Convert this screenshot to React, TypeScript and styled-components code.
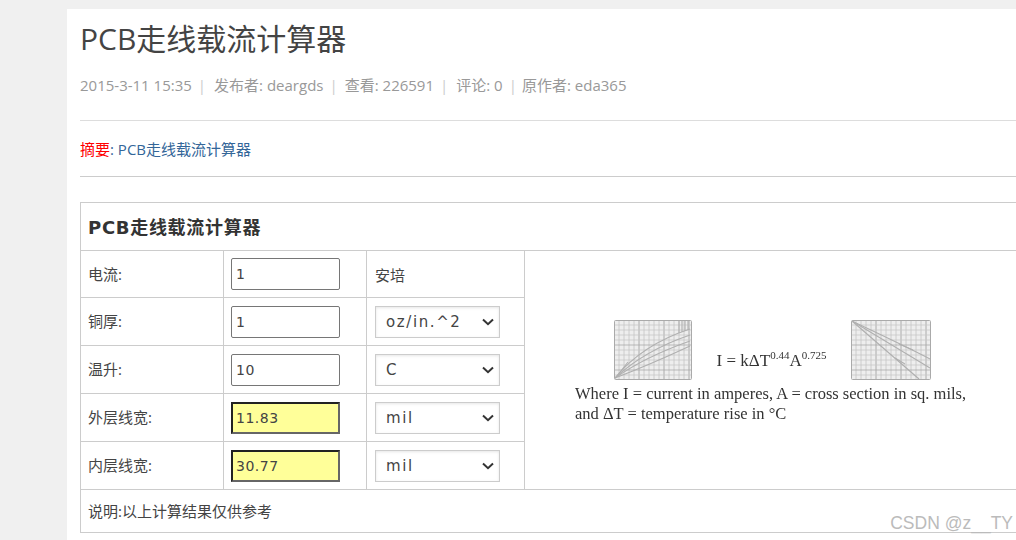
import React, { FC } from "react";
import styled, { createGlobalStyle } from "styled-components";

const latinCjk = `"Open Sans", "Noto Sans CJK SC", sans-serif`;
const inputFont = `"DejaVu Sans", "Noto Sans CJK SC", sans-serif`;

const GlobalStyle = createGlobalStyle`
  html, body {
    margin: 0;
    padding: 0;
    width: 1016px;
    height: 540px;
    overflow: hidden;
    background: #f0f0f0;
  }
`;

const Page = styled.div`
  margin: 9px 0 0 67px;
  width: 949px;
  height: 531px;
  padding: 0 0 0 13px;
  box-sizing: border-box;
  background: #fff;
  overflow: hidden;
  font-family: ${latinCjk};
`;

const Title = styled.h1`
  margin: 0;
  padding-top: 9px;
  height: 48px;
  font-size: 30px;
  line-height: 41px;
  font-weight: 400;
  color: #444;
  white-space: nowrap;
`;

const Meta = styled.div`
  margin-top: 9px;
  height: 45px;
  font-size: 15px;
  line-height: 20px;
  color: #999;
  white-space: nowrap;
  border-bottom: 1px solid #ddd;
  width: 1000px;
`;

const Sep = styled.span<{ $gap: number }>`
  color: #ccc;
  margin: 0 ${(p) => p.$gap}px 0 6px;
`;

const Summary = styled.div`
  width: 1000px;
  height: 56px;
  box-sizing: border-box;
  border-bottom: 1px solid #ccc;
  padding-top: 18px;
  font-size: 15px;
  line-height: 20px;
  color: #369;
`;

const SummaryLabel = styled.span`
  color: #f00;
`;

const CalcTable = styled.table`
  margin-top: 25px;
  width: 1000px;
  border-collapse: collapse;
  table-layout: fixed;
  color: #444;
  font-size: 15px;
`;

const HeadCell = styled.th`
  height: 48px;
  box-sizing: border-box;
  padding: 0 7px 2px;
  border: 1px solid #ccc;
  text-align: left;
  font-family: ${inputFont};
  font-size: 18px;
  font-weight: 700;
  letter-spacing: 0.7px;
  color: #333;
`;

const Cell = styled.td<{ $first?: boolean }>`
  height: ${(p) => (p.$first ? "47px" : "48px")};
  padding: 0 7px;
  border: 1px solid #ccc;
  box-sizing: border-box;
  white-space: nowrap;
`;

const LabelCell = styled(Cell)`
  padding-bottom: 2px;
`;

const FieldCell = styled(Cell)`
  padding: 0 0 0 7px;
`;

const UnitCell = styled(Cell)`
  padding: 0 8px;
`;

const FormulaCell = styled.td`
  border: 1px solid #ccc;
  padding: 0;
  vertical-align: middle;
`;

const NoteCell = styled.td`
  height: 43px;
  box-sizing: border-box;
  padding: 0 7px 1px;
  border: 1px solid #ccc;
`;

const Field = styled.div<{ $result?: boolean }>`
  width: 109px;
  height: 32px;
  box-sizing: border-box;
  padding-left: ${(p) => (p.$result ? "3px" : "4px")};
  border-radius: ${(p) => (p.$result ? "0" : "2px")};
  border-style: solid;
  border-width: ${(p) => (p.$result ? "2px" : "1px")};
  border-color: ${(p) => (p.$result ? "#222 #666 #666 #222" : "#767676")};
  background: ${(p) => (p.$result ? "#ffff99" : "#fff")};
  font-family: ${inputFont};
  font-size: 14px;
  line-height: ${(p) => (p.$result ? "28px" : "30px")};
  letter-spacing: 0.5px;
  color: #444;
`;

const Picker = styled.div`
  width: 125px;
  height: 32px;
  box-sizing: border-box;
  display: flex;
  align-items: center;
  justify-content: space-between;
  padding: 0 5px 0 10px;
  border: 1px solid #ccc;
  box-shadow: inset 0 1px 3px rgba(0, 0, 0, 0.1);
  font-family: ${inputFont};
  font-size: 15px;
  letter-spacing: 1.6px;
  color: #444;
`;

const Formula = styled.div`
  width: 391px;
  margin: 3px 0 0 50px;
  font-family: "Liberation Serif", serif;
  color: #333;
  filter: blur(0.4px);
`;

const Charts = styled.div`
  display: flex;
  align-items: flex-end;
  justify-content: space-between;
  padding: 0 35px 0 39px;
`;

const Equation = styled.div`
  font-size: 17px;
  line-height: 19px;
  padding-bottom: 10px;
  white-space: nowrap;
  sup {
    font-size: 11px;
    line-height: 0;
  }
`;

const Legend = styled.div`
  margin-top: 4px;
  font-size: 16.5px;
  line-height: 20px;
  white-space: nowrap;
`;

const Watermark = styled.div`
  position: absolute;
  right: 3px;
  bottom: 6px;
  font-family: "Liberation Sans", sans-serif;
  font-size: 17.5px;
  line-height: 21px;
  color: #bbb;
`;

const Chevron: FC = () => (
  <svg width="12" height="8" viewBox="0 0 12 8">
    <path d="M1 1.5 L6 6.2 L11 1.5" fill="none" stroke="#333" strokeWidth="2" />
  </svg>
);

const steps = (count: number) => Array.from({ length: count }, (_, i) => (i + 1) * 5);

const Graph: FC<{ width: number; curves: string[] }> = ({ width, curves }) => (
  <svg width={width} height="60" viewBox={`0 0 ${width} 60`}>
    <rect x="0.5" y="0.5" width={width - 1} height="59" fill="#eee" stroke="#aaa" rx="1" />
    {steps(Math.floor((width - 1) / 5)).map((x) => (
      <line key={x} x1={x} x2={x} y1="1" y2="59" stroke={x % 25 === 0 ? "#999" : "#c4c4c4"} strokeWidth="0.8" />
    ))}
    {steps(11).map((y) => (
      <line key={y} x1="1" x2={width - 1} y1={y} y2={y} stroke={y % 25 === 0 ? "#aaa" : "#c8c8c8"} strokeWidth="0.8" />
    ))}
    {curves.map((d) => (
      <path key={d} d={d} fill="none" stroke="#b0b0b0" strokeWidth="1.1" />
    ))}
  </svg>
);

const riseCurves = [
  "M1 58 C14 42 36 22 76 9",
  "M1 58 C16 44 38 28 76 15",
  "M1 58 C18 46 42 33 76 21",
  "M1 58 C22 50 46 40 76 26",
  "M3 56 L14 42",
  "M65 1 L65 13 M68 1 L68 12 M71 1 L71 11 M74 1 L74 10",
];

const fallCurves = [
  "M1 1 L68 59",
  "M1 1 C26 16 52 32 79 48",
  "M1 1 C28 14 54 26 79 39",
  "M48 24 L62 30",
  "M44 38 L54 44",
];

type Row = {
  label: string;
  value: string;
  result?: boolean;
  unit: string;
  plain?: boolean;
};

const rows: Row[] = [
  { label: "电流:", value: "1", unit: "安培", plain: true },
  { label: "铜厚:", value: "1", unit: "oz/in.^2" },
  { label: "温升:", value: "10", unit: "C" },
  { label: "外层线宽:", value: "11.83", unit: "mil", result: true },
  { label: "内层线宽:", value: "30.77", unit: "mil", result: true },
];

const App: FC = () => (
  <>
    <GlobalStyle />
    <Page>
      <Title>PCB走线载流计算器</Title>
      <Meta>
        2015-3-11 15:35<Sep $gap={8}>|</Sep>发布者: deargds<Sep $gap={7}>|</Sep>查看: 226591<Sep $gap={8}>|</Sep>
        评论: 0<Sep $gap={5}>|</Sep>原作者: eda365
      </Meta>
      <Summary>
        <SummaryLabel>摘要</SummaryLabel>: PCB走线载流计算器
      </Summary>
      <CalcTable>
        <colgroup>
          <col style={{ width: 143 }} />
          <col style={{ width: 143 }} />
          <col style={{ width: 158 }} />
          <col />
        </colgroup>
        <tbody>
          <tr>
            <HeadCell colSpan={4}>PCB走线载流计算器</HeadCell>
          </tr>
          {rows.map((row, i) => (
            <tr key={row.label}>
              <LabelCell $first={i === 0}>{row.label}</LabelCell>
              <FieldCell $first={i === 0}>
                <Field $result={row.result}>{row.value}</Field>
              </FieldCell>
              <UnitCell $first={i === 0}>
                {row.plain ? (
                  row.unit
                ) : (
                  <Picker>
                    {row.unit}
                    <Chevron />
                  </Picker>
                )}
              </UnitCell>
              {i === 0 && (
                <FormulaCell rowSpan={5}>
                  <Formula>
                    <Charts>
                      <Graph width={78} curves={riseCurves} />
                      <Equation>
                        I = kΔT<sup>0.44</sup>A<sup>0.725</sup>
                      </Equation>
                      <Graph width={80} curves={fallCurves} />
                    </Charts>
                    <Legend>
                      Where I = current in amperes, A = cross section in sq. mils,
                      <br />
                      and ΔT = temperature rise in °C
                    </Legend>
                  </Formula>
                </FormulaCell>
              )}
            </tr>
          ))}
          <tr>
            <NoteCell colSpan={4}>说明:以上计算结果仅供参考</NoteCell>
          </tr>
        </tbody>
      </CalcTable>
      <Watermark>CSDN @z__TY</Watermark>
    </Page>
  </>
);

export default App;
